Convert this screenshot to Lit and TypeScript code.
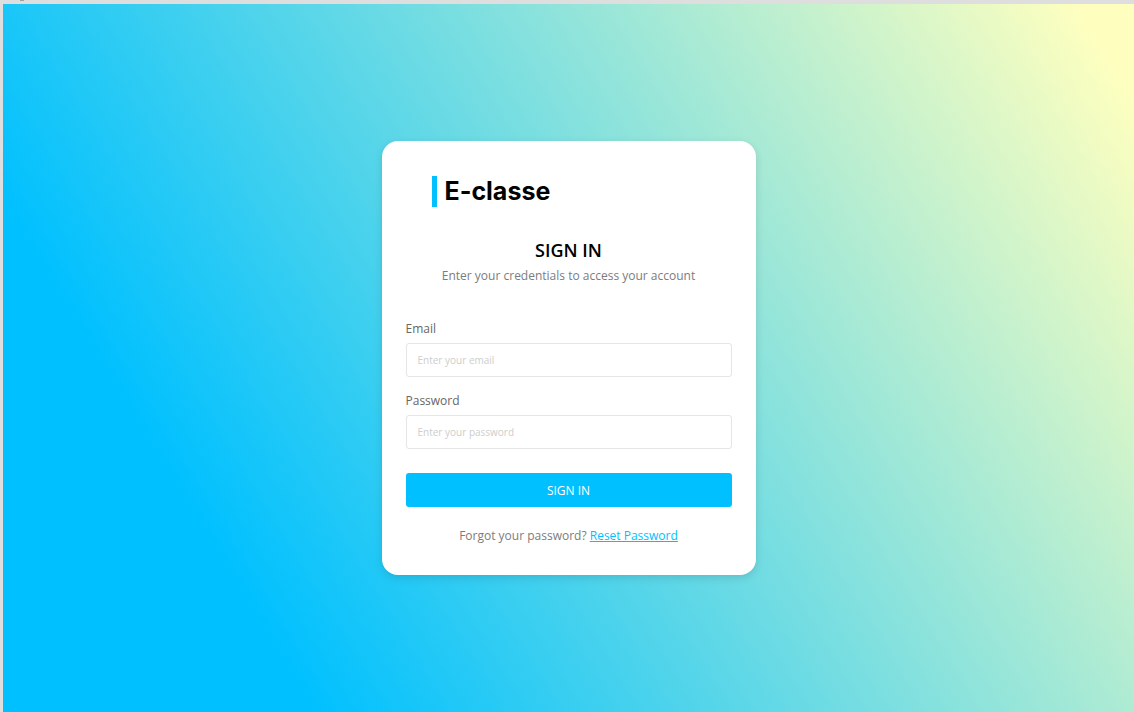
import { LitElement, html, css } from "lit";
import { customElement } from "lit/decorators.js";

@customElement("app-root")
export class AppRoot extends LitElement {
  static styles = css`
    :host {
      display: block;
      font-family: "Open Sans", Inter, sans-serif;
      color: #000;
    }
    * {
      box-sizing: border-box;
    }
    .canvas {
      position: relative;
      display: flex;
      min-height: 100vh;
      padding: 4px 0 0 3px;
      background: #dedede;
      overflow: hidden;
    }
    .tick {
      position: absolute;
      top: 0;
      left: 20px;
      width: 4px;
      height: 1px;
      background: #a0a0a0;
    }
    .screen {
      flex: 1;
      display: flex;
      align-items: center;
      justify-content: center;
      background: linear-gradient(58.5deg, #00c0ff 19.8%, #feffbf 96.4%);
    }
    .card {
      width: 374px;
      max-width: 100%;
      padding: 35px 24px 31px;
      border-radius: 16px;
      background: #fff;
      box-shadow: 0 3px 8px rgba(0, 0, 0, 0.12);
    }
    .brand {
      margin: 0 0 31px 26px;
      padding-left: 8px;
      border-left: 5px solid #00c0ff;
      font-family: Inter, "Open Sans", sans-serif;
      font-size: 25px;
      line-height: 31px;
      font-weight: 700;
    }
    .title {
      margin: 0 0 6px;
      font-size: 18px;
      line-height: 24px;
      font-weight: 600;
      text-align: center;
    }
    .note {
      margin: 0;
      font-size: 12px;
      line-height: 16px;
      color: #7c7c7c;
      text-align: center;
    }
    .form {
      display: flex;
      flex-direction: column;
      margin: 37px 0 21px;
    }
    .label {
      margin-bottom: 6px;
      font-size: 12px;
      line-height: 16px;
      font-weight: 500;
      color: #666;
    }
    .input {
      height: 34px;
      margin: 0 0 16px;
      padding: 0 11px;
      border: 1px solid #e5e5e5;
      border-radius: 3px;
      background: #fff;
      font: inherit;
      font-size: 10px;
      outline: none;
    }
    .input::placeholder {
      color: #cdcdcd;
      opacity: 1;
    }
    .submit {
      height: 34px;
      margin: 8px 0 0;
      padding: 0;
      border: 0;
      border-radius: 3px;
      background: #00c0ff;
      color: #fff;
      font: inherit;
      font-size: 12px;
      cursor: pointer;
    }
    .link {
      color: #00c0ff;
      font-weight: 500;
      text-decoration: underline;
    }
  `;

  render() {
    return html`
      <div class="canvas">
        <span class="tick"></span>
        <main class="screen">
          <section class="card">
            <h1 class="brand">E-classe</h1>
            <h2 class="title">SIGN IN</h2>
            <p class="note">Enter your credentials to access your account</p>
            <form class="form" @submit=${(e: Event) => e.preventDefault()}>
              <label class="label" for="email">Email</label>
              <input class="input" id="email" type="email" placeholder="Enter your email" />
              <label class="label" for="password">Password</label>
              <input class="input" id="password" type="password" placeholder="Enter your password" />
              <button class="submit" type="submit">SIGN IN</button>
            </form>
            <p class="note">Forgot your password? <a class="link" href="#reset">Reset Password</a></p>
          </section>
        </main>
      </div>
    `;
  }
}
